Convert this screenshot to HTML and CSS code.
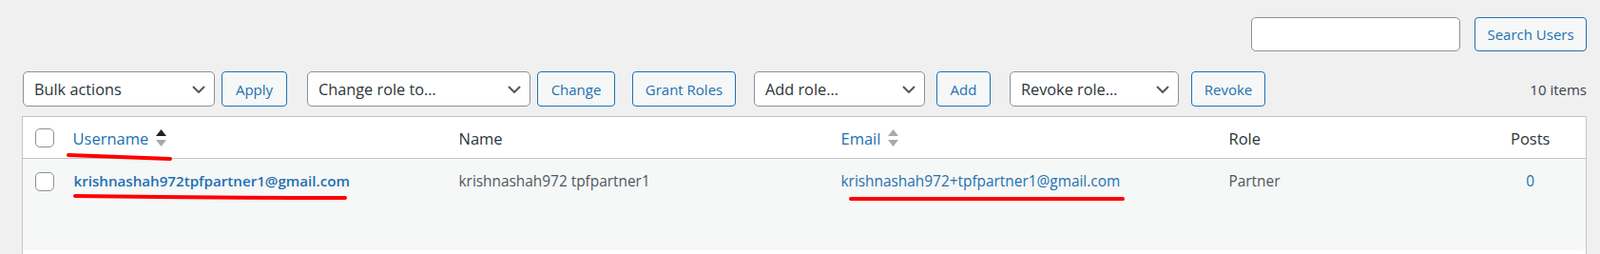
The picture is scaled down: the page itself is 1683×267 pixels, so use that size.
FILE: index.html
```html
<!DOCTYPE html>
<html lang="en">
<head>
    <meta charset="UTF-8">
    <title>Users</title>
    <link rel="stylesheet" href="styles.css">
</head>
<body>
<div class="wrap">
    <div class="search-box">
        <input type="search" class="search-input">
        <button class="button">Search Users</button>
    </div>

    <div class="tablenav">
        <div class="select-wrap w-bulk">
            <select class="select"><option>Bulk actions</option></select>
            <svg class="chevron" width="14" height="8" viewBox="0 0 14 8"><path d="M1 1l6 6 6-6" fill="none" stroke="#50575e" stroke-width="2"/></svg>
        </div>
        <button class="button b-apply">Apply</button>

        <div class="select-wrap w-change">
            <select class="select"><option>Change role to…</option></select>
            <svg class="chevron" width="14" height="8" viewBox="0 0 14 8"><path d="M1 1l6 6 6-6" fill="none" stroke="#50575e" stroke-width="2"/></svg>
        </div>
        <button class="button b-change">Change</button>

        <button class="button b-grant">Grant Roles</button>

        <div class="select-wrap w-add">
            <select class="select"><option>Add role…</option></select>
            <svg class="chevron" width="14" height="8" viewBox="0 0 14 8"><path d="M1 1l6 6 6-6" fill="none" stroke="#50575e" stroke-width="2"/></svg>
        </div>
        <button class="button b-add">Add</button>

        <div class="select-wrap w-revoke">
            <select class="select"><option>Revoke role…</option></select>
            <svg class="chevron" width="14" height="8" viewBox="0 0 14 8"><path d="M1 1l6 6 6-6" fill="none" stroke="#50575e" stroke-width="2"/></svg>
        </div>
        <button class="button b-revoke">Revoke</button>

        <span class="count">10 items</span>
    </div>

    <table class="users">
        <colgroup>
            <col class="c-check">
            <col class="c-user">
            <col class="c-name">
            <col class="c-email">
            <col class="c-role">
            <col class="c-posts">
        </colgroup>
        <thead>
            <tr>
                <td class="check"><span class="checkbox"></span></td>
                <th><a class="sort" href="#">Username
                    <svg class="arrows" width="11" height="18" viewBox="0 0 11 18"><path d="M5.5 0L11 7H0z" fill="#1d2327"/><path d="M0 11h11l-5.5 7z" fill="#a7aaad"/></svg></a></th>
                <th>Name</th>
                <th><a class="sort" href="#">Email
                    <svg class="arrows" width="11" height="18" viewBox="0 0 11 18"><path d="M5.5 0L11 7H0z" fill="#a7aaad"/><path d="M0 11h11l-5.5 7z" fill="#a7aaad"/></svg></a></th>
                <th>Role</th>
                <th class="num">Posts</th>
            </tr>
        </thead>
        <tbody>
            <tr class="alt">
                <td class="check"><span class="checkbox"></span></td>
                <td><strong><a href="#">krishnashah972tpfpartner1@gmail.com</a></strong></td>
                <td>krishnashah972 tpfpartner1</td>
                <td><a href="#">krishnashah972+tpfpartner1@gmail.com</a></td>
                <td>Partner</td>
                <td class="num"><a href="#">0</a></td>
            </tr>
            <tr>
                <td class="check"></td>
                <td></td><td></td><td></td><td></td><td></td>
            </tr>
        </tbody>
    </table>

    <!-- hand drawn marks from the screenshot -->
    <svg class="marks" width="1683" height="267">
        <path d="M72 163 Q120 165 179 167" stroke="#ff0000" stroke-width="4" stroke-linecap="round" fill="none"/>
        <path d="M79 206 Q220 208 363 208" stroke="#ff0000" stroke-width="4" stroke-linecap="round" fill="none"/>
        <path d="M895 209 Q1040 209 1181 209" stroke="#ff0000" stroke-width="4" stroke-linecap="round" fill="none"/>
    </svg>
</div>
</body>
</html>
```

FILE: styles.css
```css
body {
    margin: 0;
    background: #f0f0f1;
    font-family: "Open Sans", "Noto Sans", sans-serif;
    color: #3c434a;
    overflow: hidden;
}

.wrap {
    position: relative;
    padding: 18px 14px 0 23px;
    height: 267px;
    box-sizing: border-box;
    overflow: hidden;
}

.search-box {
    display: flex;
    justify-content: flex-end;
    gap: 15px;
    height: 36px;
}

.search-input {
    width: 220px;
    height: 36px;
    box-sizing: border-box;
    border: 1px solid #8c8f94;
    border-radius: 5px;
    background: #fff;
    margin: 0;
}

.button {
    height: 37px;
    box-sizing: border-box;
    border: 1px solid #2271b1;
    border-radius: 4px;
    background: #f6f7f7;
    color: #2271b1;
    font-family: inherit;
    font-size: 15px;
    padding: 0 12px;
    margin: 0;
}

.search-box .button {
    height: 36px;
    width: 118px;
    padding: 0;
}

.tablenav {
    display: flex;
    align-items: center;
    margin-top: 21px;
    padding-left: 1px;
    height: 37px;
}

.select-wrap {
    position: relative;
    height: 37px;
}

.select {
    -webkit-appearance: none;
    appearance: none;
    width: 100%;
    height: 37px;
    box-sizing: border-box;
    border: 1px solid #8c8f94;
    border-radius: 5px;
    background: #fff;
    color: #2c3338;
    font-family: inherit;
    font-size: 16.3px;
    padding: 0 30px 0 11px;
    margin: 0;
}

.chevron {
    position: absolute;
    right: 10px;
    top: 15px;
    pointer-events: none;
}

.w-bulk { width: 202px; }
.w-change { width: 235px; margin-left: 21px; }
.w-add { width: 180px; margin-left: 19px; }
.w-revoke { width: 178px; margin-left: 20px; }

.b-apply { width: 69px; margin-left: 7px; padding: 0; }
.b-change { width: 82px; margin-left: 7px; padding: 0; }
.b-grant { width: 109px; margin-left: 18px; padding: 0; }
.b-add { width: 57px; margin-left: 12px; padding: 0; }
.b-revoke { width: 78px; margin-left: 13px; padding: 0; }

.count {
    margin-left: auto;
    font-size: 15px;
    color: #3c434a;
}

.users {
    margin-top: 10px;
    width: 1646px;
    table-layout: fixed;
    border-collapse: collapse;
    border: 1px solid #c3c4c7;
    background: #fff;
}

.c-check { width: 41px; }
.c-user { width: 406px; }
.c-name { width: 402px; }
.c-email { width: 408px; }
.c-role { width: 271px; }
.c-posts { width: 117px; }

.users thead tr {
    height: 44px;
    border-bottom: 1px solid #c3c4c7;
}

.users th {
    text-align: left;
    font-weight: 400;
    font-size: 16.5px;
    color: #2c3338;
    padding: 1px 12px 0;
}

.users th.num,
.users td.num {
    text-align: center;
}

.users td {
    vertical-align: top;
    font-size: 15.4px;
    color: #50575e;
    padding: 13px 12px 0;
}

.users thead td {
    vertical-align: middle;
    padding-top: 0;
}

.users tbody tr {
    height: 96px;
}

.users tr.alt {
    background: #f6f7f7;
}

.users a {
    color: #2271b1;
    text-decoration: none;
}

.users strong a {
    font-weight: 600;
    font-size: 15.15px;
    padding-left: 1px;
}

.sort {
    display: inline-flex;
    align-items: center;
    gap: 8px;
}

.check {
    padding: 0 0 0 13px !important;
}

.users tbody .check {
    padding-top: 14px !important;
}

.checkbox {
    display: block;
    width: 20px;
    height: 20px;
    box-sizing: border-box;
    border: 1px solid #8c8f94;
    border-radius: 5px;
    background: #fff;
}

.marks {
    position: absolute;
    top: 0;
    left: 0;
    pointer-events: none;
}
```
